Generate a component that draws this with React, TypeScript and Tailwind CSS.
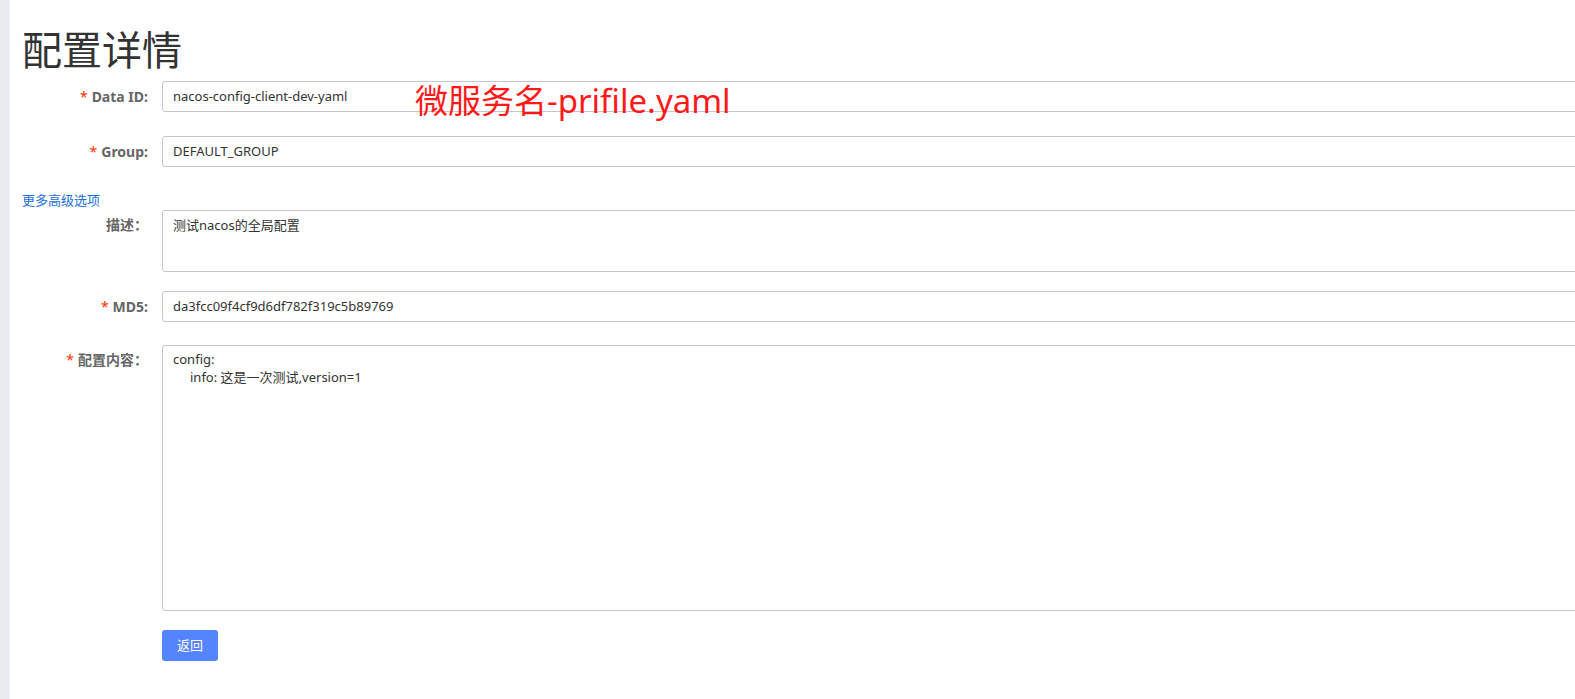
const font = 'font-["Noto_Sans","Noto_Sans_CJK_SC",sans-serif]';

const Label = ({ text, required, multi }: { text: string; required?: boolean; multi?: boolean }) => (
    <div
        className={`w-[152px] shrink-0 pr-[14px] text-right text-[14px] font-bold text-[#666] ${
            multi ? 'pt-[6px] leading-[18px]' : 'leading-[31px]'
        }`}
    >
        {required && <span className="text-[#ff3000] mr-[4px] font-normal">*</span>}
        {text}
    </div>
);

const box = 'w-[1500px] shrink-0 border border-[#c4c6cf] rounded-[3px] px-[10px] text-[13px] text-[#333]';

export default function App() {
    return (
        <div className={`flex w-[1575px] h-[699px] overflow-hidden bg-white ${font}`}>
            <div className="w-[10px] shrink-0 bg-[#e9ecf1]" />
            <div className="relative flex-1 min-w-0 overflow-hidden">
                <h1 className="pl-[12px] pt-[26px] text-[40px] leading-[48px] font-normal text-[#333]">配置详情</h1>

                {/* 表单 */}
                <div className="mt-[7px] flex flex-col">
                    <div className="flex mb-[24px]">
                        <Label text="Data ID:" required />
                        <div className={`${box} h-[31px] leading-[29px]`}>nacos-config-client-dev-yaml</div>
                    </div>
                    <div className="flex">
                        <Label text="Group:" required />
                        <div className={`${box} h-[31px] leading-[29px]`}>DEFAULT_GROUP</div>
                    </div>

                    <a className="mt-[24px] ml-[12px] text-[13px] leading-[18px] text-[#1e6fd9] cursor-pointer">更多高级选项</a>

                    <div className="flex mt-[1px] mb-[19px]">
                        <Label text="描述：" multi />
                        <div className={`${box} h-[62px] pt-[5px] leading-[18px]`}>测试nacos的全局配置</div>
                    </div>
                    <div className="flex mb-[23px]">
                        <Label text="MD5:" required />
                        <div className={`${box} h-[31px] leading-[29px]`}>da3fcc09f4cf9d6df782f319c5b89769</div>
                    </div>
                    <div className="flex">
                        <Label text="配置内容：" required multi />
                        <div className={`${box} h-[266px] pt-[4px] leading-[18px]`}>
                            <div>config:</div>
                            <div className="pl-[17px]">info: 这是一次测试,version=1</div>
                        </div>
                    </div>
                    <div className="flex mt-[19px]">
                        <div className="w-[152px] shrink-0" />
                        <button className="w-[56px] h-[31px] rounded-[3px] bg-[#5584ff] text-white text-[13px]">返回</button>
                    </div>
                </div>

                {/* 标注 */}
                <div className="absolute left-[405px] top-[80px] text-[33px] leading-[42px] text-[#ff1a1a]">
                    微服务名-prifile.yaml
                </div>
            </div>
        </div>
    );
}
